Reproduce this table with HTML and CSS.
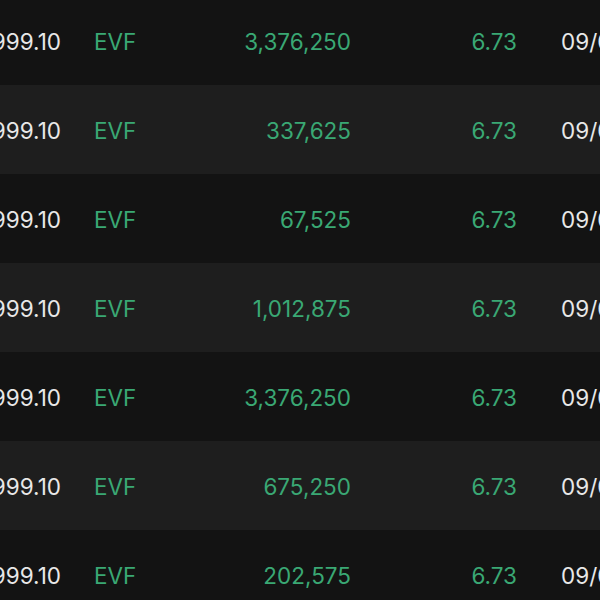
FILE: index.html
```html
<!DOCTYPE html>
<html lang="en">
<head>
<meta charset="UTF-8">
<meta name="viewport" content="width=device-width, initial-scale=1.0">
<title>Trades</title>
<link rel="stylesheet" href="styles.css">
</head>
<body>
<div class="trades">
	<div class="row">
		<div class="cell price">4,999.10</div><div class="cell type">EVF</div><div class="cell vol">3,376,250</div><div class="cell rate">6.73</div><div class="cell date">09/06/2023</div>
	</div>
	<div class="row">
		<div class="cell price">4,999.10</div><div class="cell type">EVF</div><div class="cell vol">337,625</div><div class="cell rate">6.73</div><div class="cell date">09/06/2023</div>
	</div>
	<div class="row">
		<div class="cell price">4,999.10</div><div class="cell type">EVF</div><div class="cell vol">67,525</div><div class="cell rate">6.73</div><div class="cell date">09/06/2023</div>
	</div>
	<div class="row">
		<div class="cell price">4,999.10</div><div class="cell type">EVF</div><div class="cell vol">1,012,875</div><div class="cell rate">6.73</div><div class="cell date">09/06/2023</div>
	</div>
	<div class="row">
		<div class="cell price">4,999.10</div><div class="cell type">EVF</div><div class="cell vol">3,376,250</div><div class="cell rate">6.73</div><div class="cell date">09/06/2023</div>
	</div>
	<div class="row">
		<div class="cell price">4,999.10</div><div class="cell type">EVF</div><div class="cell vol">675,250</div><div class="cell rate">6.73</div><div class="cell date">09/06/2023</div>
	</div>
	<div class="row">
		<div class="cell price">4,999.10</div><div class="cell type">EVF</div><div class="cell vol">202,575</div><div class="cell rate">6.73</div><div class="cell date">09/06/2023</div>
	</div>
</div>
</body>
</html>
```

FILE: styles.css
```css
html, body
{	margin:0;
	padding:0;
	background-color:#131313;
	overflow:hidden;
}
body
{	font-family:Inter, "Noto Sans", sans-serif;
	font-size:22.5px;
	color:#e8e8e8;
}
.trades
{	margin-top:-4px;
}
.row
{	display:grid;
	grid-template-columns:61px 153px 137px 166px 1fr;
	align-items:center;
	height:89px;
	padding-top:2px;
	box-sizing:border-box;
	background-color:#131313;
}
.row:nth-child(even)
{	background-color:#1e1e1e;
}
.cell
{	display:flex;
	white-space:nowrap;
}
.price
{	justify-content:flex-end;
}
.type
{	padding-left:33px;
	color:#3aa874;
}
.vol, .rate
{	justify-content:flex-end;
	color:#3aa874;
}
.date
{	padding-left:44px;
}
```
